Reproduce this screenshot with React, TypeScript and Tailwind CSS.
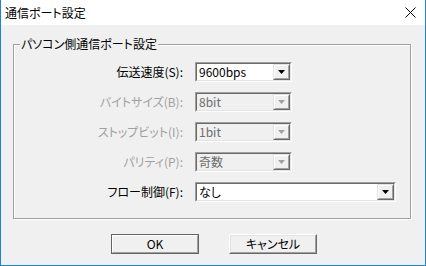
import React from "react";

const font = "font-['Noto_Sans_CJK_JP','Noto_Sans',sans-serif]";

function Arrow({ disabled }: { disabled?: boolean }) {
  return (
    <svg width="7" height="4" viewBox="0 0 7 4" className="block">
      <path d="M0 0H7L3.5 4Z" fill={disabled ? "#a0a0a0" : "#000"} />
    </svg>
  );
}

function Combo({
  value,
  wide,
  disabled,
}: {
  value: string;
  wide?: boolean;
  disabled?: boolean;
}) {
  return (
    <div
      className={`${wide ? "w-[201px]" : "w-[97px]"} h-[20px] border border-t-[#a0a0a0] border-l-[#a0a0a0] border-b-white border-r-white`}
    >
      <div
        className={`flex h-full border border-t-[#696969] border-l-[#696969] border-b-[#e3e3e3] border-r-[#e3e3e3] ${disabled ? "bg-[#f0f0f0]" : "bg-white"}`}
      >
        <div
          className={`flex-1 pl-[2px] text-[12px] leading-[16px] ${disabled ? "text-[#6d6d6d]" : "text-black"}`}
        >
          {value}
        </div>
        <div className="w-[17px] h-full border border-t-[#e3e3e3] border-l-[#e3e3e3] border-b-[#696969] border-r-[#696969]">
          <div className="flex h-full items-center justify-center border border-t-white border-l-white border-b-[#a0a0a0] border-r-[#a0a0a0] bg-[#f0f0f0]">
            <Arrow disabled={disabled} />
          </div>
        </div>
      </div>
    </div>
  );
}

function Row({
  label,
  value,
  wide,
  disabled,
}: {
  label: string;
  value: string;
  wide?: boolean;
  disabled?: boolean;
}) {
  return (
    <div className="flex h-[20px] items-center">
      <div
        className={`w-[170px] pr-[1px] text-right text-[12px] leading-[20px] ${disabled ? "text-[#a0a0a0]" : "text-black"}`}
      >
        {label}
      </div>
      <div className="w-[11px]" />
      <Combo value={value} wide={wide} disabled={disabled} />
    </div>
  );
}

function Btn({ label, def }: { label: string; def?: boolean }) {
  return (
    <div
      className={`w-[88px] h-[20px] ${def ? "border border-[#646464]" : "border border-t-white border-l-white border-b-[#696969] border-r-[#696969]"}`}
    >
      <div
        className={`flex h-full items-center justify-center bg-[#f0f0f0] text-[12px] text-black ${def ? "border border-t-white border-l-white border-b-[#a0a0a0] border-r-[#a0a0a0]" : "border border-t-[#e3e3e3] border-l-[#e3e3e3] border-b-[#a0a0a0] border-r-[#a0a0a0]"}`}
      >
        {label}
      </div>
    </div>
  );
}

export default function App() {
  return (
    <div
      className={`${font} [font-feature-settings:'palt'] w-[426px] h-[266px] flex flex-col bg-[#f0f0f0] border-l border-r border-b border-[#1883d7]`}
    >
      <div className="h-[25px] bg-white flex items-center justify-between pl-[4px] pr-[9px]">
        <span className="text-[12px] leading-[25px] text-black">通信ポート設定</span>
        <svg width="11" height="11" viewBox="0 0 11 11" className="block">
          <path d="M0.5 0.5L10.5 10.5M10.5 0.5L0.5 10.5" stroke="#000" strokeWidth="1" />
        </svg>
      </div>
      <div className="pl-[12px] pt-[19px]">
        <div className="relative w-[398px] h-[175px] border border-[#a0a0a0] shadow-[inset_1px_1px_0_#ffffff,1px_1px_0_#ffffff]">
          <div className="absolute left-[6px] top-[-9px] px-[1px] bg-[#f0f0f0] text-[12px] leading-[16px] text-black">
            パソコン側通信ポート設定
          </div>
          <div className="flex flex-col gap-[10px] pt-[17px]">
            <Row label="伝送速度(S):" value="9600bps" />
            <Row label="バイトサイズ(B):" value="8bit" disabled />
            <Row label="ストップビット(I):" value="1bit" disabled />
            <Row label="パリティ(P):" value="奇数" disabled />
            <Row label="フロー制御(F):" value="なし" wide />
          </div>
        </div>
      </div>
      <div className="flex gap-[30px] pl-[110px] pt-[15px]">
        <Btn label="OK" def />
        <Btn label="キャンセル" />
      </div>
    </div>
  );
}
